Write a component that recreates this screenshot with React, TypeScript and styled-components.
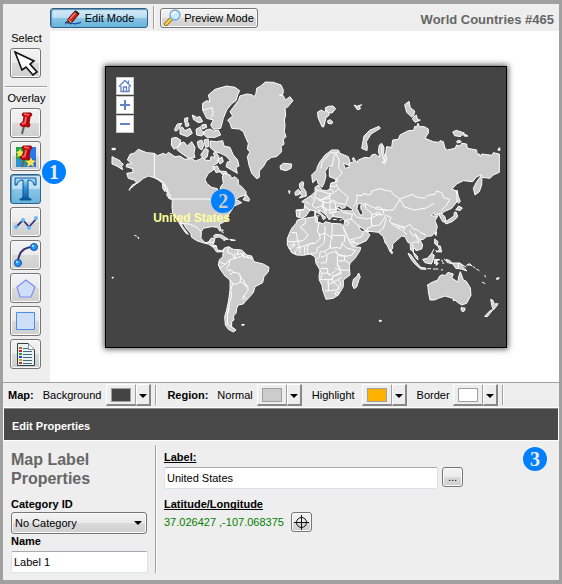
import React from "react";
import styled, { createGlobalStyle, css } from "styled-components";

const GlobalStyle = createGlobalStyle`
  *, *::before, *::after { box-sizing: border-box; }
  body {
    margin: 0;
    background: #a0a0a0;
    color: #000;
    font: 11px/14px "Liberation Sans", Arial, sans-serif;
  }
  button, input, select { font: inherit; color: inherit; margin: 0; }
  svg { display: block; }
`;

/* ---------- shell ---------- */

const Frame = styled.div`
  min-height: 100vh;
  padding: 4px 3px 4px 3px;
  display: flex;
  flex-direction: column;
`;

const Window = styled.main`
  flex: 1;
  display: flex;
  flex-direction: column;
  background: #eee;
`;

const Workspace = styled.div`
  display: grid;
  grid-template-columns: 47px minmax(0, 1fr);
`;

const TopBar = styled.header`
  grid-column: 2;
  height: 27px;
  display: flex;
  align-items: center;
  gap: 5px;
  padding-right: 5px;
`;

const VRule = styled.span`
  flex: none;
  align-self: stretch;
  width: 2px;
  margin: 2px 0;
  background: linear-gradient(90deg, #a0a0a0 50%, #fff 50%);
`;

const HRule = styled.span`
  align-self: stretch;
  height: 2px;
  margin: 8px 1px 3px 2px;
  background: linear-gradient(#a0a0a0 50%, #fff 50%);
`;

const bevel = css`
  border: 1px solid #777;
  border-radius: 3px;
  box-shadow: inset 0 0 0 1px #fafafa;
  background: linear-gradient(#f3f3f3 0%, #ebebeb 49%, #dadada 51%, #cfcfcf 100%);
`;

const pressed = css`
  border-color: #2c628b;
  box-shadow: inset 1px 1px 1px #5f8fae;
  background: linear-gradient(#d5ebf7 0%, #b8def2 49%, #8bc5e6 51%, #68b3db 100%);
`;

const ModeButton = styled.button<{ $active?: boolean }>`
  ${bevel}
  ${(p) => p.$active && pressed}
  display: flex;
  align-items: center;
  justify-content: center;
  gap: 3px;
  width: 98px;
  height: 20px;
  padding: 0;
  white-space: nowrap;
`;

const MapTitle = styled.h1`
  margin: 4px 0 0 auto;
  color: #666;
  font-size: 13px;
  line-height: 16px;
`;

const ToolBar = styled.nav`
  grid-column: 1;
  grid-row: 1 / span 2;
  display: flex;
  flex-direction: column;
  align-items: center;
  padding: 27px 2px 0 0;
`;

const ToolCaption = styled.span`
  margin: 0 0 3px 2px;
`;

const ToolGroup = styled.div`
  display: flex;
  flex-direction: column;
  gap: 3px;
`;

const ToolButton = styled.button<{ $active?: boolean }>`
  ${bevel}
  ${(p) => p.$active && pressed}
  display: grid;
  place-items: center;
  width: 31px;
  height: 30px;
  padding: 0;
`;

const Canvas = styled.section`
  grid-column: 2;
  padding: 35px 52px 34px 55px;
  background: #fff;
`;

const MapBox = styled.div`
  position: relative;
  border: 1px solid #000;
  background: #444;
  box-shadow: 0 0 6px 1px #555;
`;

const MapDrawing = styled.svg`
  width: 100%;
  height: auto;
`;

const MapControls = styled.div`
  position: absolute;
  left: 10px;
  top: 10px;
  display: flex;
  flex-direction: column;
  gap: 1px;
`;

const MapControl = styled.button`
  display: grid;
  place-items: center;
  width: 18px;
  height: 18px;
  padding: 0;
  border: 1px solid #c8c8c8;
  background: #fff;
`;

const MapLabel = styled.span`
  position: absolute;
  left: 11.8%;
  top: 51.4%;
  color: #ff9;
  font-size: 12px;
  font-weight: bold;
`;

const Badge = styled.span<{ $dim?: boolean }>`
  position: absolute;
  display: grid;
  place-items: center;
  width: 24px;
  height: 24px;
  border-radius: 50%;
  background: #0080ff;
  color: ${(p) => (p.$dim ? "#ccc" : "#eee")};
  font: bold 20px/22px "Liberation Serif", serif;
`;

const ToolSlot = styled.div`
  position: relative;
  display: flex;
  ${Badge} { left: 32px; top: -14px; }
`;

const MapBadge = styled(Badge)`
  left: 26.3%;
  top: 43.5%;
`;

/* ---------- colour bar ---------- */

const ColourBar = styled.div`
  display: flex;
  align-items: center;
  height: 25px;
  padding-left: 5px;
  border-top: 1px solid #a0a0a0;
  white-space: nowrap;
  ${VRule} { margin: 2px 10px 2px 4px; }
`;

const GroupName = styled.strong`
  margin-right: 9px;
`;

const ColourField = styled.div<{ $gap: number; $after: number }>`
  display: flex;
  align-items: center;
  gap: ${(p) => p.$gap}px;
  margin-right: ${(p) => p.$after}px;
`;

const ColourButton = styled.button`
  display: flex;
  width: 45px;
  height: 22px;
  padding: 0;
  border: 0;
  background: #eee;
`;

const raised = css`
  border: solid;
  border-width: 1px 1px 2px 1px;
  border-color: #fff #a0a0a0 #888 #fff;
`;

const SwatchWell = styled.span`
  ${raised}
  flex: 1;
  align-self: stretch;
  display: grid;
  place-items: center;
`;

const Swatch = styled.span<{ $colour: string }>`
  width: 20px;
  height: 14px;
  border: 1px solid #a0a0a0;
  background: ${(p) => p.$colour};
`;

const ArrowWell = styled.span`
  ${raised}
  border-right: 2px solid #888;
  align-self: stretch;
  width: 15px;
  display: grid;
  place-items: center;
  padding-top: 3px;
`;

/* ---------- properties ---------- */

const PanelTitle = styled.h2`
  display: flex;
  align-items: center;
  height: 32px;
  margin: 1px 1px 1px 1px;
  padding: 2px 8px 0 8px;
  border-top: 1px solid #888;
  background: #484848;
  color: #fff;
  font-size: 11px;
  outline: 1px solid #fff;
`;

const Properties = styled.div`
  position: relative;
  display: grid;
  grid-template-columns: 137px 2px minmax(0, 1fr);
  gap: 7px;
  padding: 4px 8px 6px 8px;
  ${VRule} { margin: 0; height: 128px; }
  ${Badge} { right: 12px; top: 6px; }
`;

const Summary = styled.section`
  display: flex;
  flex-direction: column;
  align-items: flex-start;
  padding-top: 5px;
`;

const SummaryTitle = styled.h3`
  margin: 0 0 9px 0;
  color: #666;
  font-size: 16px;
  line-height: 19px;
`;

const FieldName = styled.label<{ $underline?: boolean }>`
  font-weight: bold;
  line-height: 15px;
  text-decoration: ${(p) => (p.$underline ? "underline" : "none")};
  text-decoration-skip-ink: none;
`;

const SelectShell = styled.div`
  position: relative;
  width: 136px;
  svg { position: absolute; right: 5px; top: 9px; pointer-events: none; }
`;

const Category = styled.select`
  ${bevel}
  appearance: none;
  width: 100%;
  height: 22px;
  padding: 0 3px;
`;

const TextInput = styled.input`
  width: 100%;
  height: 22px;
  padding: 0 2px;
  border: 1px solid #dde2e8;
  border-top-color: #a8aab0;
  border-radius: 2px;
  background: #fff;
`;

const NameField = styled.div`
  width: 137px;
  display: flex;
  flex-direction: column;
  gap: 2px;
`;

const Details = styled.section`
  display: flex;
  flex-direction: column;
  align-items: flex-start;
  padding-top: 5px;
`;

const LabelRow = styled.div`
  align-self: stretch;
  display: flex;
  gap: 4px;
  margin: 2px 88px 8px 0;
`;

const SmallButton = styled.button`
  ${bevel}
  flex: none;
  display: grid;
  place-items: center;
  width: 21px;
  height: 20px;
  padding: 0;
`;

const PositionRow = styled.div`
  display: flex;
  align-items: center;
  gap: 7px;
`;

const Coordinates = styled.output`
  color: #008000;
`;

/* ---------- icons ---------- */

const PencilIcon = () => (
  <svg width="18" height="16" viewBox="0 0 18 16">
    <path d="M2 14C0 12 4 11 5 13C7 15 9 12 11 14C13 13 15 14 17 12" fill="none" stroke="#164fa8" strokeWidth="1.2" />
    <path d="M4 9L11 1L15 4L8 12L3 13Z" fill="#cc2418" stroke="#500" />
    <path d="M6 9L12 2" stroke="#ff7668" strokeWidth="1.5" />
    <path d="M3 13L4 9L8 12Z" fill="#eab87c" />
    <path d="M3 13l1-3 2 2Z" fill="#111" />
    <path d="M11 1l4 3" stroke="#222" strokeWidth="2" />
  </svg>
);

const LensIcon = () => (
  <svg width="17" height="17" viewBox="0 0 17 17">
    <path d="M2 15L8 9" stroke="#a37616" strokeWidth="4" strokeLinecap="round" />
    <path d="M2 15L8 9" stroke="#ffd84b" strokeWidth="2" strokeLinecap="round" />
    <circle cx="11" cy="6" r="5" fill="#c8eeff" stroke="#73a5da" strokeWidth="1.3" />
    <path d="M8 6Q9 3 12 3" fill="none" stroke="#fff" strokeWidth="2" />
  </svg>
);

const PointerIcon = () => (
  <svg width="27" height="26" viewBox="0 0 27 26">
    <path d="M3 2L22 11L18 14L25 22L21 25L14 17L10 20Z" fill="#fff" stroke="#111" strokeWidth="1.6" />
  </svg>
);

const PinShape = () => (
  <g>
    <path d="M12 16L10 24" stroke="#5c6464" strokeWidth="2" />
    <path d="M11 3L19 3L20 5L18 7L17 13L18 15L17 17L9 16L8 14L11 12L12 7L10 5Z" fill="#d10b10" stroke="#8b090c" />
    <path d="M12 4L17 5M14 7L13 13L10 14" fill="none" stroke="#ff6d65" strokeWidth="1.6" />
    <path d="M17 7L15 14L17 16" fill="none" stroke="#950006" />
  </g>
);

const PinIcon = () => (
  <svg width="27" height="26" viewBox="0 0 27 26"><PinShape /></svg>
);

const ImagePinIcon = () => (
  <svg width="27" height="26" viewBox="0 0 27 26">
    <path d="M4 4H24V24H4Z" fill="#1aa83c" />
    <path d="M14 4H24V17H13Z" fill="#2b78ed" />
    <path d="M4 16Q12 14 15 24H4Z" fill="#2d92cc" />
    <path d="M14 24Q15 17 24 15V24Z" fill="#2b6fce" />
    <path d="M8 5l1 3 3 1-2 2 1 3-3-1-3 1 1-3-2-2 3-1ZM19 14l1 3 4 1-3 2 1 4-3-2-4 2 1-4-3-2 4-1Z" fill="#ffe054" />
    <PinShape />
  </svg>
);

const TextIcon = () => (
  <svg width="25" height="26" viewBox="0 0 25 26">
    <defs>
      <linearGradient id="textTool" x2="0" y2="1">
        <stop stopColor="#b8e5ff" /><stop offset=".4" stopColor="#3aa0e5" /><stop offset="1" stopColor="#075395" />
      </linearGradient>
    </defs>
    <path d="M2 2H23V9H21Q20 4 15 4V20Q15 23 18 23V24H7V23Q10 23 10 20V4Q5 4 4 9H2Z" fill="url(#textTool)" stroke="#0d529a" />
  </svg>
);

const PolylineIcon = () => (
  <svg width="26" height="24" viewBox="0 0 26 24">
    <path d="M3 17L10 10L16 17L23 9" fill="none" stroke="#343477" strokeWidth="1.8" />
    <g fill="#63b8ff"><circle cx="3" cy="17" r="2" /><circle cx="10" cy="10" r="2" /><circle cx="16" cy="18" r="2" /><circle cx="23" cy="8" r="2" /></g>
  </svg>
);

const ArcIcon = () => (
  <svg width="27" height="26" viewBox="0 0 27 26">
    <path d="M6 20Q7 5 21 5" fill="none" stroke="#34346f" strokeWidth="2" />
    <g fill="#2196ff" stroke="#124d99"><circle cx="6" cy="21" r="3.5" /><circle cx="22" cy="5" r="3.5" /></g>
    <g fill="#9adfff"><circle cx="5" cy="20" r="1.2" /><circle cx="21" cy="4" r="1.2" /></g>
  </svg>
);

const PentagonIcon = () => (
  <svg width="21" height="20" viewBox="0 0 21 20">
    <path d="M11 2L20 9L16 19H5L2 9Z" fill="#d0dff8" stroke="#7d8cf0" strokeWidth="1.2" />
  </svg>
);

const SquareIcon = () => (
  <svg width="19" height="18" viewBox="0 0 19 18">
    <path d="M0.500 0.500H18.500V17.500H0.500Z" fill="#d0dff8" stroke="#4b8de8" />
  </svg>
);

const LegendIcon = () => (
  <svg width="20" height="25" viewBox="0 0 20 25">
    <path d="M1.500 1.500H12.500L18.500 7.500V23.500H1.500Z" fill="#e8f3f5" stroke="#30404b" />
    <path d="M12.500 1.500V7.500H18.500" fill="#fff" stroke="#78909c" />
    <path d="M7 6.500H12M7 9.500H16M7 12.500H16M7 15.500H16M7 18.500H16M7 21.500H16" stroke="#4b6875" />
    {["#d55b20", "#d52525", "#22a344", "#2744d6", "#cda91b", "#c53425"].map((c, i) => (
      <path key={c} d={`M3 ${5 + i * 3}h3v2h-3Z`} fill={c} />
    ))}
  </svg>
);

const TargetIcon = () => (
  <svg width="15" height="15" viewBox="0 0 15 15" fill="none" stroke="#111">
    <circle cx="7.500" cy="7.500" r="5" /><path d="M7.500 0V15M0 7.500H15" />
  </svg>
);

const ArrowIcon = () => (
  <svg width="8" height="4" viewBox="0 0 8 4"><path d="M0 0H8L4 4Z" /></svg>
);

const HomeIcon = () => (
  <svg width="14" height="14" viewBox="0 0 14 14" fill="none" stroke="#5f82c8" strokeWidth="1.3">
    <path d="M1 7.500L7 1.500L13 7.500M3 7V12.500H11V7M5.500 12V8H8.500V12M10.500 1.500V4" />
  </svg>
);

const ZoomIcon = ({ plus }: { plus?: boolean }) => (
  <svg width="12" height="12" viewBox="0 0 12 12">
    <path d={plus ? "M1 6H11M6 1V11" : "M1 6H11"} stroke="#5f82c8" strokeWidth="2" />
  </svg>
);

/* ---------- world map ---------- */

const WorldMap = () => (
  <MapDrawing viewBox="0 0 1200 840" role="img" aria-label="World map">
    <g fill="#ccc" stroke="#fff" strokeWidth="3" strokeLinejoin="round">
      {/* Greenland, Arctic islands and North America */}
      <g transform="translate(-18 -21)">
        <path d="M399 143L415 122L420 108L440 102L455 104L463 110L468 100L470 85L482 78L496 66L520 67L543 75L550 90L549 102L538 106L550 107L556 120L570 110L579 122L562 142L555 145L557 165L553 180L555 195L553 215L558 230L550 238L552 253L543 259L545 275L530 290L515 292L500 302L490 320L478 333L478 352L470 356L455 340L447 315L442 290L450 276L442 268L445 250L438 235L430 215L418 207L395 205L390 190L383 180L398 168L390 155Z" />
        <path d="M325 105L345 88L380 78L405 82L419 92L413 105L408 122L395 131L380 150L370 175L362 205L340 208L332 195L340 180L320 175L308 150L308 130L320 122L330 125ZM308 150L336 143L339 158L335 172" />
        <path d="M318 210L330 207L340 213L355 210L362 225L345 232L320 232L308 220ZM288 208L302 200L304 211L314 218L305 228L290 225ZM240 205L247 201L255 212L270 205L277 220L262 230L240 222ZM223 210L232 192L245 190L238 205L228 214ZM254 175l10-2-2 12-8 2ZM277 165L290 172L300 170L308 185L295 188L280 178ZM305 195L318 193L320 202L308 207ZM255 190l10-2 2 9-9 3Z" />
        <path d="M215 235L228 232L242 240L240 255L222 268L214 255ZM240 250L252 246L262 258L275 245L285 262L282 280L285 292L268 296L252 285L238 275L230 268ZM292 245L305 240L312 255L305 270L295 262ZM312 240L325 237L325 260L317 262ZM315 265L325 270L322 290L312 298L302 285Z" />
        <path d="M330 243L350 245L368 242L372 258L390 262L400 285L413 300L417 318L408 322L412 340L395 330L378 320L382 306L392 304L378 288L362 280L345 275L330 262ZM340 320L352 318L360 335L348 338ZM353 299L366 291L370 305L360 312ZM359 333L379 335L382 341L366 343Z" />
        <path d="M82 300L90 283L103 279L115 268L140 278L163 280L172 287L190 280L198 284L205 277L225 290L240 288L255 298L275 295L286 303L300 298L307 292L315 300L330 302L333 290L345 292L340 280L346 275L357 290L352 310L340 316L340 330L325 340L315 358L320 370L335 382L352 386L357 405L362 380L370 370L367 350L372 340L390 345L395 355L405 350L415 360L415 373L425 380L438 395L438 405L420 410L405 420L398 425L412 420L425 428L412 434L402 438L395 450L385 465L382 480L368 488L358 493L362 508L360 514L352 502L335 500L310 505L304 515L303 535L315 548L326 546L333 535L345 534L342 548L338 555L349 557L352 570L365 572L372 568L370 575L350 576L340 562L325 552L315 550L290 542L275 532L272 520L258 504L250 490L242 485L248 500L265 523L258 520L245 502L235 485L218 460L216 440L217 420L205 405L195 385L188 370L175 360L163 353L145 348L130 355L115 368L98 374L88 388L110 370L105 361L85 355L80 340L99 337L98 326L78 320L81 312L96 311Z" />
        <path d="M163 280V353L175 358L188 365L200 382L206 400L215 408M217 417H327L340 424L354 423L367 437L389 434L395 421L405 418M240 490L268 492L290 502L304 514M325 550L328 544L342 550M336 560L349 559" fill="none" />
        <path d="M429 419L439 404L449 418L446 424ZM36 290L60 302L62 307L70 312L65 319L68 329L48 317L36 312ZM36 265h10v4h-10ZM540 318L550 310L575 312L573 325L558 332L542 328ZM188 371L196 382L195 395L188 385ZM199 402L216 418L207 416Z" />
      </g>

      {/* Central and South America */}
      <g transform="translate(-18 369)">
        <path d="M372 175L385 170L400 178L425 180L440 195L455 198L462 215L490 222L507 232L505 245L492 260L488 278L465 290L460 308L445 325L435 335L430 342L415 345L410 355L408 370L400 378L402 390L395 395L395 410L408 420L400 426L385 418L376 405L374 380L380 360L386 330L390 300L390 270L375 258L362 240L355 225L358 210L368 200L370 185Z" />
        <path d="M387 170L381 187L397 192L404 205L390 209L387 225L378 235L387 244L389 238L401 247L419 251L421 263L431 270L434 282L443 288L444 302L431 318L440 328M416 179L410 194L425 190L429 200L456 205M432 187L429 200M445 195L441 204M405 206L424 198M358 216L377 223L388 210M376 223L359 235M390 254L401 247M398 281L411 283L421 276L431 280L439 291M398 281L392 300L395 316L390 334L386 355L382 376L382 403L404 418M398 281L390 270M388 355L382 372M431 318L428 330M404 190L406 207M423 257L420 276" fill="none" />
        <path d="M340 138L347 133L365 135L385 148L370 148L358 141L345 142ZM389 148L406 151L393 151ZM362 119l8 2-5 4 6 4M370 151h6M103 136l7 2M112 141l5 3-2 3M425 404l8-1-5 5ZM36 262h4v2h-4ZM86 0h5" />
      </g>

      {/* Europe, Russia and Asia */}
      <g transform="translate(552 -21)">
        <path d="M65 345L80 330L82 320L90 305L105 285L125 270L145 270L150 280L175 290L180 305L176 316L160 310L165 325L177 322L178 310L192 305L187 298L190 292L201 308L205 300L225 292L240 294L245 285L256 282L262 288L270 290L265 275L268 255L275 250L282 262L281 280L286 286L290 260L305 262L308 240L325 238L330 225L355 212L371 211L374 199L380 201L384 190L389 200L403 200L415 207L415 219L405 235L430 245L445 247L450 242L460 245L465 265L472 270L495 265L500 255L510 258L515 250L530 252L532 265L560 270L561 282L568 282L570 289L575 282L600 285L606 286L610 278L628 282L628 337L610 345L600 355L576 352L575 375L568 395L555 405L550 385L560 365L575 345L560 350L548 365L520 362L500 372L485 388L498 392L503 410L500 426L485 445L462 455L455 462L465 470L467 484L459 486L452 475L448 465L434 465L432 458L423 467L443 469L435 482L442 500L438 515L425 528L411 529L400 538L390 540L398 555L395 567L378 572L375 565L370 566L371 578L382 588L384 600L376 592L367 571L362 570L360 548L354 548L345 530L335 528L308 552L308 565L300 575L291 555L285 548L280 530L265 517L240 514L231 516L215 503L205 498L212 512L223 516L226 509L240 525L229 542L190 560L180 545L168 520L160 500L165 482L155 473L130 470L128 460L141 454L160 452L140 446L138 454L123 457L130 467L118 480L108 465L95 455L85 450L92 460L108 473L100 479L94 465L72 452L60 450L48 468L35 475L20 470L18 450L42 448L45 430L35 425L50 415L65 405L75 395L75 382L85 375L95 390L110 392L120 387L122 371L138 365L136 357L118 350L118 325L127 316L115 320L105 335L108 347L103 368L96 382L85 372L80 357L68 368Z" />
        <path d="M83 156L94 150L104 156L108 149L116 158L118 165L108 173L101 201L96 200L84 172ZM105 144L115 139L129 138L137 146L126 159L116 158L109 152ZM113 182l8-3 7 7-3 6-11-2ZM192 135L201 139L215 134L209 140L211 147L202 149ZM344 134L357 124L361 143L374 153L371 168L365 171L350 157ZM367 176L379 165L383 179L391 180L375 187ZM215 265L222 228L239 211L267 199L271 205L243 222L229 245L232 261L231 272ZM488 216L499 211L523 219L511 230L494 227ZM521 222L532 226L533 229L522 228ZM500 244L508 240L514 246L502 249ZM625 266L629 263L630 271L624 271ZM277 305L284 305L286 285L291 297L283 313Z" />
        <path d="M28 372L35 365L41 367L39 382L48 395L49 408L28 414L35 406L29 398L36 391L30 386ZM15 397L24 388L31 394L27 404L16 406ZM-4 392L0 393 -2 401Z" />
        <path d="M137 279L131 292L127 316M93 326L96 306L110 291L122 278L137 279L145 276M137 279L148 300L146 324L157 339L136 360M121 370L143 365L139 355M119 379H137M119 386L133 397L146 387L138 372M145 386L175 411L167 433L145 430L128 420L120 426L119 402L131 399M119 402L98 395L82 391L75 402L75 414L94 419L119 415M82 391L78 385M62 408L74 420L66 435L76 445L97 437L101 424L85 420M42 438L61 450M93 425L112 428L125 424L137 431L137 448L114 450L98 438L105 457M107 444L109 463M120 446L119 460L137 454M101 426L98 445M121 426L118 451M98 416L123 406M46 424L59 433M159 457L187 463L184 477L163 482M165 482L178 488L170 498M183 477L210 500L215 505M188 457L201 472L218 474L227 477L244 474L270 461M201 415L200 405L217 407L220 400L235 405L245 401L245 393L270 386L292 393L301 392L313 406L330 417L357 407L371 403L375 410L403 415L413 406L435 403L439 393L455 398L461 413L479 419L469 437L454 451M201 415L197 432L190 438M218 439L225 430L260 447L291 451L310 450L330 418L343 441L373 450L409 444L432 429M225 430L227 445L249 464L266 456L277 465L258 463M245 460L244 500L231 505L236 516M244 475L245 498L269 495L279 480L288 466L303 472L298 484L318 501L332 501L345 504L338 513L351 524M306 490L344 502L360 493L370 507L383 510L391 517L408 525M322 503L335 510M289 474L280 505L264 517M359 511L367 526L378 528L387 547L376 545L366 550L371 570M374 519L392 542M438 466L455 458M178 540L213 531L222 518M283 466L278 451L290 449M255 445L267 440L281 450M18 452L42 450M30 452L28 470" fill="none" />
        <path d="M203 432l13-2-4 7 1 11 5 7 1 9-9 1-9-19ZM139 444L148 438L154 445L164 444L170 436L188 448L187 453L160 452Z" fill="#444" />
        <path d="M276 254L275 279L284 304" fill="none" />
      </g>

      {/* Africa, the Indian Ocean and Oceania */}
      <g transform="translate(552 369)">
        <path d="M22 90L45 85L75 80L83 82L82 95L100 102L106 95L125 100L155 102L158 110L170 140L187 170L212 172L210 182L195 205L180 220L178 230L180 255L160 270L160 290L145 315L130 325L108 328L98 300L96 286L88 270L87 259L90 240L78 220L75 200L60 192L40 196L20 195L5 188L-8 165L-8 145L5 115L18 100Z" />
        <path d="M45 86L48 98L31 111L55 135L38 153L23 153L19 128L5 128M78 80L77 94L86 100L82 124L90 135L105 129L125 144L127 102M127 136H163M88 134L91 145L76 160L58 161L51 166M103 130L104 155L91 169L82 173L81 186L76 189L61 191M127 143L121 155L122 172L104 184L90 186L89 200L80 207M164 136L164 154L156 161L151 176L142 172L123 175L116 167M154 160L171 174L196 182L185 196L164 199L143 192L136 179M142 196L142 229L149 235L154 251L128 259L127 269L91 269L96 253L90 240M104 184L112 197L108 218L92 219M80 214L85 219M106 197L93 202M112 197L116 190L133 185L150 198L165 197L163 211L181 221M145 213L163 212M146 226L151 240L179 241M136 243L120 255L113 249L97 250M92 235L113 236L113 250L120 256M128 259L144 252L150 247M126 260L130 277L114 283L115 267M130 277L143 269L155 262M130 277L145 288L147 297L136 300L121 302L105 303M115 283L115 303M143 269L151 277L151 289L145 292M-8 155L8 155L15 164L3 175L-5 174M8 155L24 154L29 171L15 185L17 193M31 172L44 166L51 165L54 192M30 171L30 191M43 169L45 194M52 167L68 158M138 305L135 314L143 317L146 307ZM180 153L205 161M190 150L190 162M0 165H14M20 174L31 171M105 108V129M135 235L151 240" fill="none" />
        <path d="M206 249L211 262L208 266L200 291L192 296L187 285L190 268L200 260ZM302 179L309 189L303 190ZM268 391h6v3h-6Z" />
        <path d="M412 285L430 275L442 271L450 257L460 254L464 258L474 247L490 252L485 264L504 276L506 260L511 245L520 270L529 274L541 294L543 315L530 340L515 345L500 335L495 330L491 333L488 325L465 318L445 325L433 330L420 330L415 305L414 292ZM513 353L525 354L524 362L519 365L514 362Z" />
        <path d="M354 190L362 194L379 217L391 231L386 232L375 222L364 209ZM389 232L407 234L408 238L391 237ZM412 236H423M429 237H445M453 241L459 238M398 208L412 205L425 190L433 196L430 208L424 222L405 218ZM434 208L449 209L438 213L445 221L438 226L440 214L434 222ZM455 209l3 8M463 206l4 7M457 220L463 219M469 208L480 212L487 219L510 219L524 236L531 243L514 237L497 235L489 222L471 217ZM505 219V236M512 221L529 232M529 226L539 221L547 229M549 229L556 235M559 237L568 242M434 147L444 155L442 167L434 161ZM443 167L451 168L455 186L440 185L449 180ZM432 177L424 192M438 180L440 187M436 126L440 126L438 137L435 132Z" />
        <path d="M464 96L479 87L492 78L493 67L498 66L503 78L500 84L486 95L468 102ZM497 60L506 48L517 54L510 62L503 60ZM501 0L505 19L511 34L505 40L501 29ZM602 328L608 330L613 342L624 341L620 348L610 360L606 349ZM584 379L601 361L608 360L592 380ZM576 276l10 5M584 255l3 7M618 266l6-3 4 1-5 5ZM75 62L78 73L74 79ZM75 79L88 77M129 88L140 89M149 91L157 88" />
      </g>
    </g>
  </MapDrawing>
);

/* ---------- page ---------- */

const overlayTools = [
  { name: "Pin", icon: <PinIcon /> },
  { name: "Image pin", icon: <ImagePinIcon /> },
  { name: "Text", icon: <TextIcon />, active: true },
  { name: "Line", icon: <PolylineIcon /> },
  { name: "Arc", icon: <ArcIcon /> },
  { name: "Polygon", icon: <PentagonIcon /> },
  { name: "Rectangle", icon: <SquareIcon /> },
  { name: "Legend", icon: <LegendIcon /> },
];

type ColourProps = { name: string; colour: string; gap: number; after: number };

const ColourPicker = ({ name, colour, gap, after }: ColourProps) => (
  <ColourField $gap={gap} $after={after}>
    <span>{name}</span>
    <ColourButton type="button" aria-label={`${name} colour`}>
      <SwatchWell><Swatch $colour={colour} /></SwatchWell>
      <ArrowWell><ArrowIcon /></ArrowWell>
    </ColourButton>
  </ColourField>
);

export default function App() {
  return (
    <Frame>
      <GlobalStyle />
      <Window>
        <Workspace>
          <ToolBar aria-label="Tools">
            <ToolCaption>Select</ToolCaption>
            <ToolButton type="button" aria-label="Select"><PointerIcon /></ToolButton>
            <HRule />
            <ToolCaption>Overlay</ToolCaption>
            <ToolGroup>
              {overlayTools.map((tool) => (
                <ToolSlot key={tool.name}>
                  <ToolButton type="button" aria-label={tool.name} $active={tool.active}>{tool.icon}</ToolButton>
                  {tool.active && <Badge>1</Badge>}
                </ToolSlot>
              ))}
            </ToolGroup>
          </ToolBar>
          <TopBar>
            <ModeButton type="button" $active><PencilIcon />Edit Mode</ModeButton>
            <VRule />
            <ModeButton type="button"><LensIcon />Preview Mode</ModeButton>
            <MapTitle>World Countries #465</MapTitle>
          </TopBar>
          <Canvas>
            <MapBox>
              <WorldMap />
              <MapControls>
                <MapControl type="button" aria-label="Home"><HomeIcon /></MapControl>
                <MapControl type="button" aria-label="Zoom in"><ZoomIcon plus /></MapControl>
                <MapControl type="button" aria-label="Zoom out"><ZoomIcon /></MapControl>
              </MapControls>
              <MapLabel>United States</MapLabel>
              <MapBadge $dim>2</MapBadge>
            </MapBox>
          </Canvas>
        </Workspace>

        <ColourBar>
          <GroupName>Map:</GroupName>
          <ColourPicker name="Background" colour="#444" gap={5} after={0} />
          <VRule />
          <GroupName>Region:</GroupName>
          <ColourPicker name="Normal" colour="#ccc" gap={4} after={10} />
          <ColourPicker name="Highlight" colour="#ffb300" gap={7} after={10} />
          <ColourPicker name="Border" colour="#fff" gap={3} after={0} />
          <VRule />
        </ColourBar>

        <PanelTitle>Edit Properties</PanelTitle>
        <Properties>
          <Summary>
            <SummaryTitle>Map Label<br />Properties</SummaryTitle>
            <FieldName htmlFor="category">Category ID</FieldName>
            <SelectShell>
              <Category id="category"><option>No Category</option></Category>
              <ArrowIcon />
            </SelectShell>
            <NameField>
              <FieldName htmlFor="name">Name</FieldName>
              <TextInput id="name" defaultValue="Label 1" />
            </NameField>
          </Summary>
          <VRule />
          <Details>
            <FieldName htmlFor="label" $underline>Label:</FieldName>
            <LabelRow>
              <TextInput id="label" defaultValue="United States" />
              <SmallButton type="button" aria-label="Edit label">...</SmallButton>
            </LabelRow>
            <FieldName htmlFor="position" $underline>Latitude/Longitude</FieldName>
            <PositionRow>
              <Coordinates id="position">37.026427 ,-107.068375</Coordinates>
              <SmallButton type="button" aria-label="Pick position"><TargetIcon /></SmallButton>
            </PositionRow>
          </Details>
          <Badge>3</Badge>
        </Properties>
      </Window>
    </Frame>
  );
}
